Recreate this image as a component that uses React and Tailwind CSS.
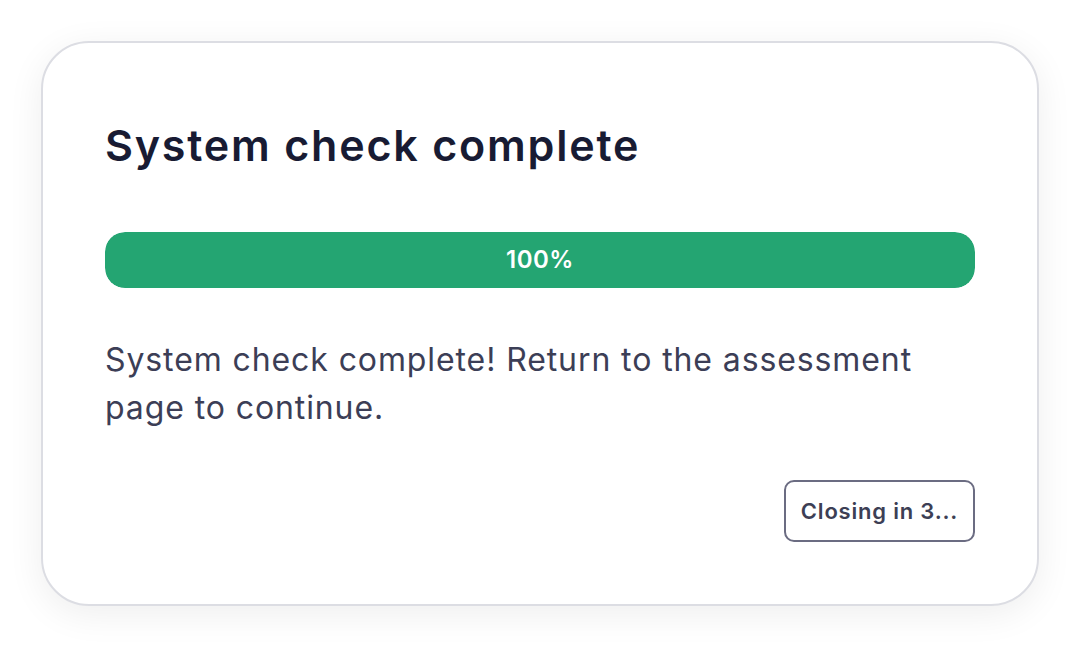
import React from 'react'

const App = () => {
  const progress = 100

  return (
    <div className="min-h-screen w-full bg-white flex items-start justify-center pt-[41px] font-['Inter','Noto_Sans',sans-serif]">
      <div className="w-[998px] h-[565px] bg-white border-2 border-[#dcdde3] rounded-[48px] shadow-[0_8px_36px_rgba(0,0,0,0.07)] px-[62px] pt-[78px] pb-[62px] flex flex-col">
        <h1 className="text-[43px] leading-[48px] font-semibold text-[#181b33] tracking-[1.8px]">
          System check complete
        </h1>

        <div className="mt-[63px] h-[56px] w-full rounded-[20px] bg-[#f0f1f4] overflow-hidden">
          <div
            className="h-full rounded-[20px] bg-[#24a572] flex items-center justify-center"
            style={{ width: `${progress}%` }}
          >
            <span className="text-white text-[24px] font-semibold tracking-[0.5px]">{progress}%</span>
          </div>
        </div>

        <p className="mt-[48px] max-w-[860px] text-[32px] leading-[48px] text-[#3c3e56] tracking-[0.9px]">
          System check complete! Return to the assessment page to continue.
        </p>

        <div className="mt-auto flex justify-end">
          <button className="h-[62px] w-[191px] border-2 border-[#6b6c82] rounded-[10px] text-[22px] font-semibold text-[#3d3f55] bg-white tracking-[0.8px]">
            Closing in 3...
          </button>
        </div>
      </div>
    </div>
  )
}

export default App
